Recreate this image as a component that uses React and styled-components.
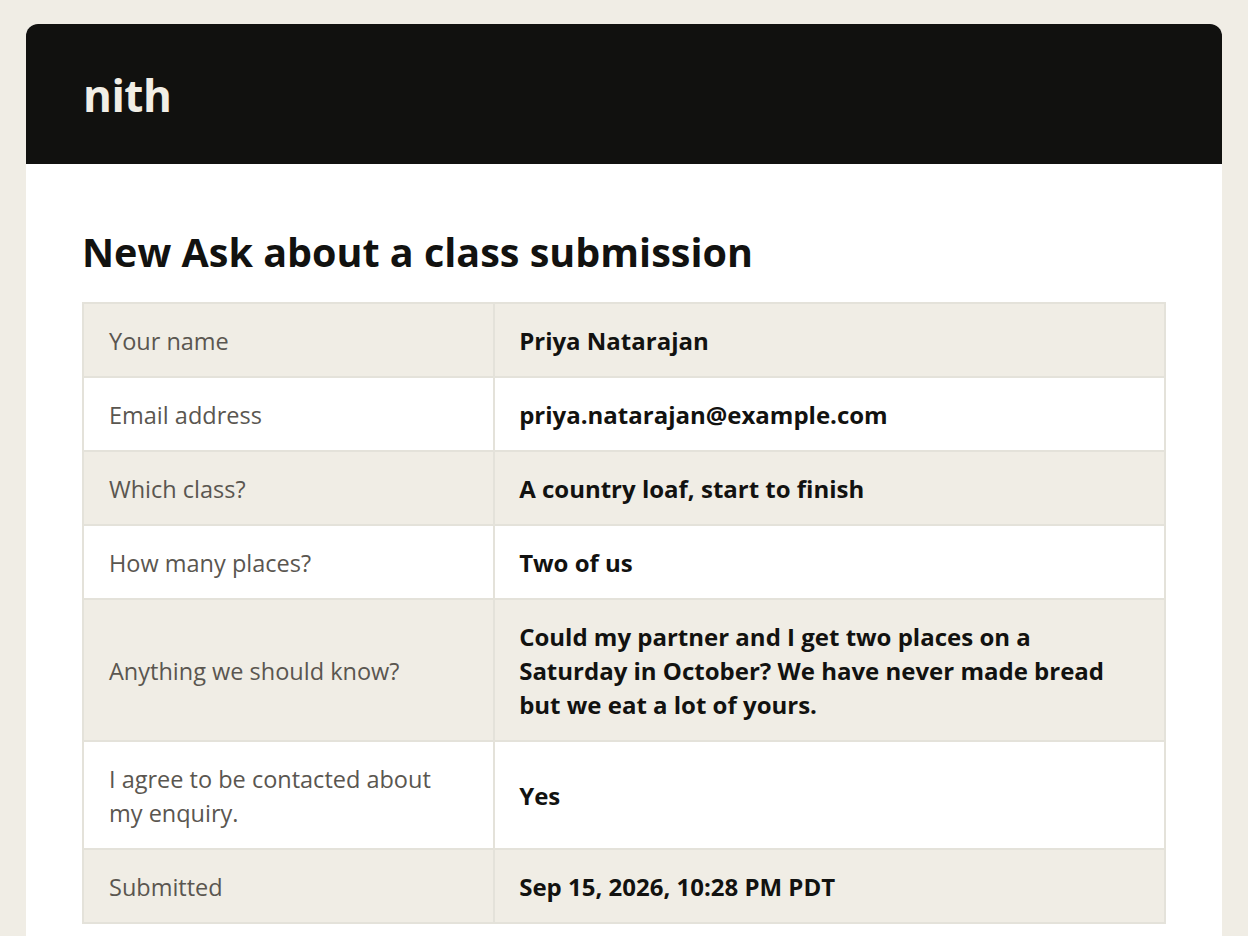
import React from "react";
import styled, { createGlobalStyle } from "styled-components";

const Global = createGlobalStyle`
  html, body { margin: 0; padding: 0; }
  body {
    background: #f0ede5;
    font-family: "Open Sans", "Noto Sans", "Liberation Sans", sans-serif;
    color: #121210;
  }
`;

const Page = styled.div`
  padding: 24px 26px 0;
`;

const Card = styled.div`
  background: #ffffff;
  border-radius: 12px 12px 0 0;
  overflow: hidden;
  min-height: 960px;
`;

const Header = styled.header`
  background: #11110f;
  height: 140px;
  display: flex;
  align-items: center;
  padding: 0 57px;
  box-sizing: border-box;
`;

const Brand = styled.div`
  color: #f1eee6;
  font-size: 44px;
  font-weight: 700;
  letter-spacing: -0.5px;
  line-height: 1;
  padding-top: 2px;
`;

const Body = styled.main`
  padding: 62px 56px 40px;
`;

const Title = styled.h1`
  margin: 0 0 24px;
  font-size: 39.5px;
  font-weight: 700;
  line-height: 52px;
  color: #121210;
`;

const Table = styled.table`
  width: 100%;
  border-collapse: collapse;
  table-layout: fixed;
  border: 2px solid #e4e2da;
`;

const Row = styled.tr`
  background: ${(p) => (p.$shaded ? "#f0ede5" : "#ffffff")};
`;

const Label = styled.td`
  box-sizing: border-box;
  width: 38%;
  padding: 20px 25px 18px;
  border: 2px solid #e4e2da;
  font-size: 23.5px;
  line-height: 34px;
  color: #5a5650;
  vertical-align: middle;
`;

const Value = styled.td`
  box-sizing: border-box;
  padding: 20px 24px 18px;
  border: 2px solid #e4e2da;
  font-size: 24px;
  line-height: 34px;
  font-weight: 700;
  color: #121210;
  vertical-align: middle;
`;

const rows = [
  ["Your name", "Priya Natarajan"],
  ["Email address", "priya.natarajan@example.com"],
  ["Which class?", "A country loaf, start to finish"],
  ["How many places?", "Two of us"],
  [
    "Anything we should know?",
    "Could my partner and I get two places on a Saturday in October? We have never made bread but we eat a lot of yours.",
  ],
  ["I agree to be contacted about my enquiry.", "Yes"],
  ["Submitted", "Sep 15, 2026, 10:28 PM PDT"],
];

export default function App() {
  return (
    <Page>
      <Global />
      <Card>
        <Header>
          <Brand>nith</Brand>
        </Header>
        <Body>
          <Title>New Ask about a class submission</Title>
          <Table>
            <tbody>
              {rows.map(([l, v], i) => (
                <Row key={l} $shaded={i % 2 === 0}>
                  <Label>{l}</Label>
                  <Value>{v}</Value>
                </Row>
              ))}
            </tbody>
          </Table>
        </Body>
      </Card>
    </Page>
  );
}
